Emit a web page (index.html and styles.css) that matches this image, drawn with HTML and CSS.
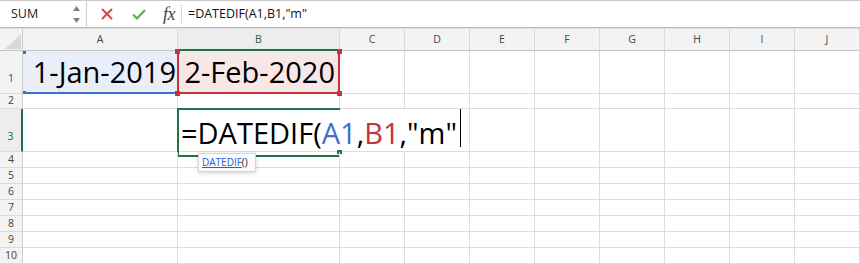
FILE: index.html
```html
<!DOCTYPE html>
<html lang="en">
<head>
    <meta charset="UTF-8">
    <link rel="stylesheet" href="styles.css">
</head>
<body>
    <div class="fbar">
        <div class="namebox">
            <span class="nbText">SUM</span>
            <svg class="spin" width="9" height="20" viewBox="0 0 9 20">
                <polygon points="1,6 4.5,1 8,6" fill="#808080"/>
                <polygon points="1,13 8,13 4.5,18" fill="#808080"/>
            </svg>
        </div>
        <div class="fbtn">
            <svg width="14" height="14" viewBox="0 0 14 14"><path d="M2 2 L12 12 M12 2 L2 12" stroke="#d9464a" stroke-width="2" fill="none"/></svg>
        </div>
        <div class="fbtn">
            <svg width="14" height="14" viewBox="0 0 14 14"><path d="M1 7.5 L5 11.5 L13 3" stroke="#5aaf53" stroke-width="2.2" fill="none"/></svg>
        </div>
        <div class="fx">fx</div>
        <div class="fsep"></div>
        <div class="ftext">=DATEDIF(A1,B1,"m"</div>
    </div>

    <div class="sheet">
        <div class="corner">
            <svg width="22" height="21" viewBox="0 0 22 21"><polygon points="21,5 5,20 21,20" fill="#d8d8d8"/></svg>
        </div>
        <div class="ch">A</div><div class="ch sel">B</div><div class="ch">C</div><div class="ch">D</div><div class="ch">E</div>
        <div class="ch">F</div><div class="ch">G</div><div class="ch">H</div><div class="ch">I</div><div class="ch">J</div>

        <div class="rh tall">1</div>
        <div class="c refA big"><span class="hA hTop"></span><span class="hA hBot"></span>1-Jan-2019</div>
        <div class="c refB big"><span class="hB tl"></span><span class="hB tr"></span><span class="hB bl"></span><span class="hB br"></span>2-Feb-2020</div>
        <div class="c"></div><div class="c"></div><div class="c"></div><div class="c"></div><div class="c"></div><div class="c"></div><div class="c"></div><div class="c"></div>

        <div class="rh">2</div>
        <div class="c"></div><div class="c"></div><div class="c"></div><div class="c"></div><div class="c"></div>
        <div class="c"></div><div class="c"></div><div class="c"></div><div class="c"></div><div class="c"></div>

        <div class="rh tall act">3</div>
        <div class="c"></div>
        <div class="c active big"><span class="fill"></span>=DATEDIF(<span class="rA">A1</span>,<span class="rB">B1</span>,"m"<span class="caret"></span></div>
        <div class="c"></div><div class="c"></div><div class="c"></div><div class="c"></div><div class="c"></div><div class="c"></div>

        <div class="rh">4</div>
        <div class="c"></div><div class="c"></div><div class="c"></div><div class="c"></div><div class="c"></div>
        <div class="c"></div><div class="c"></div><div class="c"></div><div class="c"></div><div class="c"></div>
        <div class="rh">5</div>
        <div class="c"></div><div class="c"></div><div class="c"></div><div class="c"></div><div class="c"></div>
        <div class="c"></div><div class="c"></div><div class="c"></div><div class="c"></div><div class="c"></div>
        <div class="rh">6</div>
        <div class="c"></div><div class="c"></div><div class="c"></div><div class="c"></div><div class="c"></div>
        <div class="c"></div><div class="c"></div><div class="c"></div><div class="c"></div><div class="c"></div>
        <div class="rh">7</div>
        <div class="c"></div><div class="c"></div><div class="c"></div><div class="c"></div><div class="c"></div>
        <div class="c"></div><div class="c"></div><div class="c"></div><div class="c"></div><div class="c"></div>
        <div class="rh">8</div>
        <div class="c"></div><div class="c"></div><div class="c"></div><div class="c"></div><div class="c"></div>
        <div class="c"></div><div class="c"></div><div class="c"></div><div class="c"></div><div class="c"></div>
        <div class="rh">9</div>
        <div class="c"></div><div class="c"></div><div class="c"></div><div class="c"></div><div class="c"></div>
        <div class="c"></div><div class="c"></div><div class="c"></div><div class="c"></div><div class="c"></div>
        <div class="rh">10</div>
        <div class="c"></div><div class="c"></div><div class="c"></div><div class="c"></div><div class="c"></div>
        <div class="c"></div><div class="c"></div><div class="c"></div><div class="c"></div><div class="c"></div>

        <div class="tip"><span class="tipLink">DATEDIF</span>()</div>
    </div>
</body>
</html>
```

FILE: styles.css
```css
*{box-sizing: border-box}
body{margin: 0;width: 860px;height: 264px;overflow: hidden;background: #fff;font-family: "Open Sans", sans-serif;color: #000}

/* formula bar */
.fbar{display: flex;align-items: center;height: 28px;border-top: 1px solid #c9c9c9;border-bottom: 1px solid #bcbcbc;background: #fff}
.namebox{display: flex;align-items: center;justify-content: space-between;width: 87px;height: 100%;padding: 0 5px 0 11px;border-right: 1px solid #cfcfcf}
.nbText{font-size: 12.5px;line-height: 26px;color: #222}
.spin{display: block;margin-top: 1px}
.fbtn{display: flex;align-items: center;justify-content: center;width: 14px;height: 14px;margin-left: 13px}
.fbtn + .fbtn{margin-left: 18px}
.fx{margin-left: 17px;font: italic 18px/26px "Liberation Serif", serif;color: #444;letter-spacing: -0.5px}
.fsep{width: 1px;height: 18px;margin-left: 6px;background: #d9d9d9}
.ftext{margin-left: 6px;font-size: 12.5px;line-height: 26px;color: #111;white-space: nowrap}

/* sheet */
.sheet{position: relative;display: grid;grid-template-columns: 23px 155px 162px repeat(8, 65px);grid-template-rows: 22px 43px 15px 43px repeat(7, 16px);border-top: 1px solid #dedede}
.corner{background: #f3f3f3;border-right: 1px solid #cbcbcb;border-bottom: 1px solid #c4c4c4}
.corner svg{display: block}
.ch{background: #f3f3f3;border-right: 1px solid #dadada;border-bottom: 1px solid #c4c4c4;font-size: 10.5px;line-height: 21px;text-align: center;color: #444}
.ch.sel{background: #ededed;border-bottom: 2px solid #217346;color: #1f5f3b}
.rh{display: flex;align-items: flex-end;justify-content: center;background: #f3f3f3;border-right: 1px solid #cbcbcb;border-bottom: 1px solid #dadada;font-size: 10.5px;line-height: 1;padding-bottom: 3px;color: #444}
.rh.tall{padding-bottom: 10px}
.rh.act{border-right: 2px solid #217346;background: #ededed;color: #1f6b3f}
.c{position: relative;display: flex;align-items: flex-end;border-right: 1px solid #dcdcdc;border-bottom: 1px solid #dcdcdc;white-space: nowrap}
.big{font-size: 29px;line-height: 1;padding-bottom: 7px}

/* ranges being referenced */
.refA{justify-content: flex-end;padding-right: 1px;background: #e9eef9}
.refA::before{content: "";position: absolute;left: 0;right: -1px;bottom: -1px;height: 2px;background: #3b70d1}
.hA{position: absolute;left: 0;width: 3px;height: 3px;background: #3b70d1}
.hTop{top: 0}
.hBot{bottom: -1px}
.refB{justify-content: flex-end;padding-right: 4px;background: #f8e7e7}
.refB::before{content: "";position: absolute;left: -1px;right: -1px;top: 0;bottom: -1px;border: 2px solid #c6343b;border-top: none}
.hB{position: absolute;width: 5px;height: 5px;background: #c6343b;z-index: 1}
.tl{left: -3px;top: -2px}
.tr{right: -3px;top: -2px}
.bl{left: -3px;bottom: -3px}
.br{right: -3px;bottom: -3px}

/* active cell, text overflows into C and D so no right edge shows */
.active{grid-column: span 3;padding-left: 3px;padding-bottom: 4px}
.active::after{content: "";position: absolute;left: -1px;top: -1px;width: 161px;height: 45px;border: 2px solid #217346;border-right: none;pointer-events: none}
.rA{color: #3b70d1}
.rB{color: #c6343b}
.caret{display: inline-block;width: 1px;height: 38px;margin-left: 3px;background: #000;vertical-align: -5px}
.fill{position: absolute;left: 159px;top: 41px;width: 5px;height: 4px;background: #217346}

/* function tooltip */
.tip{position: absolute;left: 198px;top: 124px;height: 19px;padding: 0 7px 0 3px;background: #fbfbfb;border: 1px solid #d6d6d6;box-shadow: 0 1px 4px rgba(0,0,0,0.18);font-size: 10px;line-height: 17px;color: #222}
.tipLink{color: #1f63d3;text-decoration: underline}
```
